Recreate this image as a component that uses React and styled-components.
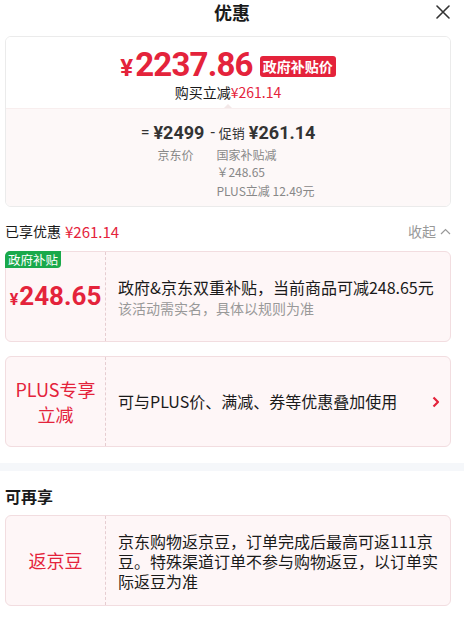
import React from 'react';
import styled, { createGlobalStyle } from 'styled-components';

const RED = '#e4233b';

const Global = createGlobalStyle`
  html, body { margin: 0; padding: 0; background: #fff; }
  body {
    font-family: "Noto Sans CJK SC", "Noto Sans", sans-serif;
    color: #1a1a1a;
    width: 464px;
    height: 622px;
    overflow: hidden;
  }
  * { box-sizing: border-box; }
`;

const Page = styled.div`
  width: 464px;
`;

const Header = styled.header`
  height: 24px;
  display: grid;
  grid-template-columns: 1fr auto 1fr;
  align-items: center;
`;

const Title = styled.h1`
  grid-column: 2;
  margin: 0;
  font-size: 18px;
  font-weight: 700;
  line-height: 24px;
  color: #1a1a1a;
`;

const Close = styled.button`
  justify-self: end;
  margin-right: 14px;
  border: 0;
  padding: 0;
  background: none;
  display: flex;
  width: 14px;
  height: 14px;
`;

const Section = styled.section`
  padding: 0 13px 0 5px;
  margin-top: ${(p) => p.$mt || 0}px;
`;

const TopCard = styled.div`
  border: 1px solid #ebebeb;
  border-radius: 6px;
  overflow: hidden;
`;

const Upper = styled.div`
  height: 71px;
  padding-top: 10px;
  display: flex;
  flex-direction: column;
  align-items: center;
  background: #fff;
`;

const PriceLine = styled.div`
  display: flex;
  align-items: center;
  gap: 7px;
  height: 38px;
`;

const BigPrice = styled.span`
  font-family: Roboto, "Noto Sans", sans-serif;
  font-weight: 700;
  font-size: 33px;
  letter-spacing: -0.8px;
  line-height: 38px;
  color: ${RED};
`;

const Yen = styled.span`
  font-size: ${(p) => p.$size}px;
  margin-right: ${(p) => p.$gap || 0}px;
  letter-spacing: 0;
`;

const RedTag = styled.span`
  background: ${RED};
  color: #fff;
  font-size: 14px;
  font-weight: 700;
  height: 21px;
  line-height: 21px;
  padding: 0 3px;
  border-radius: 3px;
`;

const SubLine = styled.div`
  margin-top: -2px;
  font-size: 14px;
  line-height: 18px;
  color: #1a1a1a;
`;

const RedText = styled.span`
  color: ${RED};
  font-size: ${(p) => p.$size || 14}px;
`;

const Lower = styled.div`
  position: relative;
  background: #fdf8f8;
  padding: 14px 0 7px;
  display: flex;
  justify-content: center;
  border-top: 1px solid #f8eeee;
  &::before {
    content: '';
    position: absolute;
    top: -9px;
    left: 50%;
    margin-left: -4px;
    border: 4px solid transparent;
    border-bottom-color: #f3e8e8;
  }
`;

const FormulaCol = styled.div`
  display: flex;
  flex-direction: column;
  align-items: ${(p) => (p.$center ? 'center' : 'flex-start')};
`;

const Formula = styled.div`
  height: 20px;
  display: flex;
  align-items: center;
  gap: 4px;
  color: #333;
  font-size: 13px;
  line-height: 18px;
  white-space: pre;
  margin-right: ${(p) => p.$mr || 0}px;
`;

const FormulaNum = styled.span`
  font-family: Roboto, "Noto Sans", sans-serif;
  font-size: ${(p) => (p.$op ? 16 : 18)}px;
  font-weight: ${(p) => (p.$op ? 400 : 700)};
  line-height: 20px;
  color: #333;
`;

const Labels = styled.div`
  margin-top: 3px;
  padding-left: ${(p) => p.$pl || 0}px;
  display: flex;
  flex-direction: column;
  gap: 2px;
`;

const Label = styled.div`
  font-size: 12px;
  line-height: 17px;
  color: #888;
  white-space: nowrap;
`;

const InfoRow = styled.div`
  height: 20px;
  display: flex;
  align-items: center;
  justify-content: space-between;
`;

const InfoLeft = styled.div`
  font-size: 14px;
  color: #1a1a1a;
  display: flex;
  align-items: center;
  gap: 4px;
`;

const Collapse = styled.div`
  font-size: 14px;
  color: #999;
  display: flex;
  align-items: center;
  gap: 4px;
`;

const Card = styled.div`
  position: relative;
  height: 91px;
  display: grid;
  grid-template-columns: 100px 1fr auto;
  background: #fef6f7;
  border: 1px solid #f2dde0;
  border-radius: 6px;
  margin-top: ${(p) => p.$mt || 0}px;
`;

const CardLeft = styled.div`
  border-right: 1px dashed #e6cdd1;
  display: flex;
  align-items: center;
  justify-content: center;
  text-align: center;
  color: ${RED};
  font-size: 18px;
  line-height: 25px;
`;

const CardRight = styled.div`
  display: flex;
  flex-direction: column;
  justify-content: center;
  padding: 0 8px 0 12px;
`;

const MainText = styled.div`
  font-size: 16px;
  line-height: ${(p) => p.$lh || 21}px;
  color: #1a1a1a;
`;

const SubText = styled.div`
  margin-top: 1px;
  font-size: 14px;
  line-height: 18px;
  color: #999;
`;

const Arrow = styled.div`
  display: flex;
  align-items: center;
  padding-right: 10px;
`;

const GreenTag = styled.span`
  position: absolute;
  top: -1px;
  left: -1px;
  background: #1aa94b;
  color: #fff;
  font-size: 12.5px;
  line-height: 17px;
  height: 17px;
  padding: 0 3px;
  border-radius: 5px 0 4px 0;
`;

const CardPrice = styled.span`
  font-family: Roboto, "Noto Sans", sans-serif;
  font-weight: 700;
  font-size: 26px;
  color: ${RED};
  margin-top: 2px;
`;

const Band = styled.div`
  margin-top: 16px;
  height: 8px;
  background: #f5f7fa;
`;

const SectionTitle = styled.h2`
  margin: 14px 0 0;
  padding: 0 13px 0 5px;
  font-size: 16px;
  font-weight: 700;
  line-height: 22px;
  color: #1a1a1a;
`;

export default function App() {
  return (
    <Page>
      <Global />
      <Header>
        <Title>优惠</Title>
        <Close aria-label="关闭">
          <svg width="14" height="14" viewBox="0 0 14 14">
            <path d="M1 1 L13 13 M13 1 L1 13" stroke="#333" strokeWidth="1.6" strokeLinecap="round" />
          </svg>
        </Close>
      </Header>

      <Section $mt={12}>
        <TopCard>
          <Upper>
            <PriceLine>
              <BigPrice>
                <Yen $size={24} $gap={2}>¥</Yen>2237.86
              </BigPrice>
              <RedTag>政府补贴价</RedTag>
            </PriceLine>
            <SubLine>
              购买立减<RedText>¥261.14</RedText>
            </SubLine>
          </Upper>
          <Lower>
            <FormulaCol $center>
              <Formula $mr={6}>
                <FormulaNum $op>=</FormulaNum>
                <FormulaNum>¥2499</FormulaNum>
              </Formula>
              <Labels>
                <Label>京东价</Label>
              </Labels>
            </FormulaCol>
            <FormulaCol>
              <Formula>
                <FormulaNum $op>-</FormulaNum>
                <span>促销</span>
                <FormulaNum>¥261.14</FormulaNum>
              </Formula>
              <Labels $pl={6}>
                <Label>
                  国家补贴减
                  <br />￥248.65
                </Label>
                <Label>PLUS立减 12.49元</Label>
              </Labels>
            </FormulaCol>
          </Lower>
        </TopCard>
      </Section>

      <Section $mt={14}>
        <InfoRow>
          <InfoLeft>
            已享优惠<RedText $size={15}>¥261.14</RedText>
          </InfoLeft>
          <Collapse>
            收起
            <svg width="11" height="7" viewBox="0 0 11 7">
              <path d="M1 6 L5.5 1.5 L10 6" fill="none" stroke="#999" strokeWidth="1.2" />
            </svg>
          </Collapse>
        </InfoRow>

        <Card $mt={10}>
          <GreenTag>政府补贴</GreenTag>
          <CardLeft>
            <CardPrice>
              <Yen $size={16} $gap={1}>¥</Yen>248.65
            </CardPrice>
          </CardLeft>
          <CardRight>
            <MainText>政府&amp;京东双重补贴，当前商品可减248.65元</MainText>
            <SubText>该活动需实名，具体以规则为准</SubText>
          </CardRight>
        </Card>

        <Card $mt={14}>
          <CardLeft>
            PLUS专享
            <br />
            立减
          </CardLeft>
          <CardRight>
            <MainText>可与PLUS价、满减、券等优惠叠加使用</MainText>
          </CardRight>
          <Arrow>
            <svg width="8" height="12" viewBox="0 0 8 12">
              <path d="M1.5 1.5 L6 6 L1.5 10.5" fill="none" stroke={RED} strokeWidth="2.2" strokeLinejoin="round" />
            </svg>
          </Arrow>
        </Card>
      </Section>

      <Band />

      <SectionTitle>可再享</SectionTitle>

      <Section $mt={8}>
        <Card>
          <CardLeft>返京豆</CardLeft>
          <CardRight>
            <MainText $lh={20}>
              京东购物返京豆，订单完成后最高可返111京豆。特殊渠道订单不参与购物返豆，以订单实际返豆为准
            </MainText>
          </CardRight>
        </Card>
      </Section>
    </Page>
  );
}
